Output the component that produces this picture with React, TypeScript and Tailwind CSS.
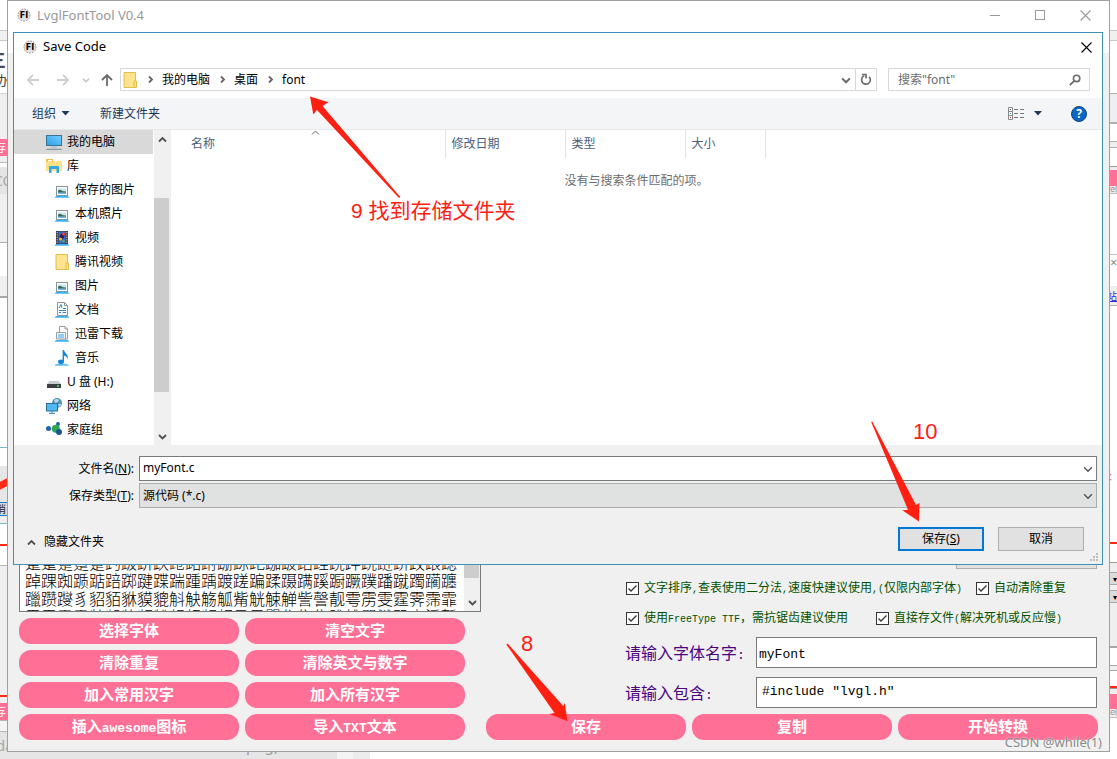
import React from "react";

type Segment = { box: string; text?: string; textClass?: string };

const LEFT_STRIP: Segment[] = [
  { box: "h-[30px] bg-white" },
  { box: "h-[11px] bg-[#f0f0f0] border-y border-[#c9c9c9]" },
  { box: "h-[28px] bg-white", text: "三", textClass: "text-[18px] leading-[38px] text-[#4a4a55] -ml-3 font-bold" },
  { box: "h-[24px] bg-white", text: "办", textClass: "text-[13px] leading-[22px] text-[#444] -ml-1" },
  { box: "h-[46px] bg-[#efefef] border-t border-[#d4d4d4]" },
  { box: "h-[17px] bg-[#ff6f96]", text: "存", textClass: "text-[11px] leading-[17px] text-white -ml-[5px]" },
  { box: "h-[7px] bg-[#efefef] border-b border-[#b8b8b8]" },
  { box: "h-[4px] bg-white" },
  { box: "h-[27px] bg-[#e4e4e4]", text: "CC", textClass: "text-[14px] leading-[27px] text-[#a8a8a8] -ml-[6px]" },
  { box: "h-[48px] bg-[#f0f0f0]" },
  { box: "h-[34px] bg-white border-t border-[#b0b0b0]" },
  { box: "h-[20px] bg-[#efefef]" },
  { box: "h-[151px] bg-white border-t-2 border-[#a8a8a8]" },
  { box: "h-[19px] bg-white border-t border-[#7db8d8]" },
  { box: "h-[14px] bg-[#e6e6e6]" },
  { box: "h-[8px] bg-[#ff2a16] -skew-y-[25deg]" },
  { box: "h-[14px] bg-[#e6e6e6]" },
  { box: "h-[14px] bg-[#d5dde3] border-y border-[#1979ca]", text: "消", textClass: "text-[10px] leading-[12px] text-[#222] -ml-1" },
  { box: "h-[7px] bg-[#eeeeee]" },
  { box: "h-[21px] bg-white border-t border-[#7db8d8]" },
  { box: "h-[2px] bg-[#ff2a16]" },
  { box: "h-[19px] bg-white" },
  { box: "h-[130px] bg-[#efefef] border-t border-[#b8b8b8]" },
  { box: "h-[2px] bg-[#ff2a16]" },
  { box: "h-[6px] bg-[#efefef]" },
  { box: "h-[17px] bg-[#ff6f96]", text: "存", textClass: "text-[11px] leading-[17px] text-white -ml-[5px]" },
  { box: "h-[12px] bg-[#f5f5f5] border-y border-[#b8b8b8]" },
  { box: "h-[20px] bg-[#e4e4e4]", text: "da", textClass: "text-[15px] leading-[26px] text-[#a8a8a8] -ml-1" },
];

const RIGHT_STRIP: Segment[] = [
  { box: "h-[30px] bg-white" },
  { box: "h-[11px] bg-[#f0f0f0] border-y border-[#c9c9c9]" },
  { box: "h-[52px] bg-white" },
  { box: "h-[31px] bg-[#efefef] border-t border-b-2 border-[#b0b0b0]" },
  { box: "h-[17px] bg-white" },
  { box: "h-[7px] bg-[#efefef] border-y border-[#b0b0b0]" },
  { box: "h-[18px] bg-white" },
  { box: "h-[4px] bg-[#efefef] border-t border-[#999]" },
  { box: "h-[16px] bg-[#ff6f96]" },
  { box: "h-[8px] bg-[#efefef] border-b border-[#c0c0c0]", text: "e(", textClass: "text-[9px] leading-[6px] text-[#999]" },
  { box: "h-[60px] bg-white" },
  { box: "h-[32px] bg-white border-t border-[#c0c0c0]", text: "×", textClass: "text-[13px] leading-[14px] text-[#888]" },
  { box: "h-[20px] bg-[#efefef] border-b border-[#b0b0b0]", text: "站", textClass: "text-[10px] leading-[20px] text-[#2a2adf] underline -ml-[3px]" },
  { box: "h-[164px] bg-white" },
  { box: "h-[12px] bg-white", text: "录", textClass: "text-[11px] leading-[12px] text-[#e85560] -ml-[9px]" },
  { box: "h-[60px] bg-white" },
  { box: "h-[2px] bg-[#ff2a16]" },
  { box: "h-[18px] bg-white" },
  { box: "h-[10px] bg-[#efefef] border-t border-[#999]" },
  { box: "h-[13px] bg-[#dcdcdc] border-y border-[#a8a8a8]", text: "▾", textClass: "text-[8px] leading-[11px] text-black text-right" },
  { box: "h-[5px] bg-[#efefef]" },
  { box: "h-[13px] bg-[#dcdcdc] border-y border-[#a8a8a8]", text: "▾", textClass: "text-[8px] leading-[11px] text-black text-right" },
  { box: "h-[43px] bg-[#efefef]" },
  { box: "h-[19px] bg-white border-t-2 border-[#a8a8a8]" },
  { box: "h-[6px] bg-[#efefef] border-y border-[#a8a8a8]" },
  { box: "h-[15px] bg-white" },
  { box: "h-[2px] bg-[#ff2a16]" },
  { box: "h-[6px] bg-[#efefef] border-t border-[#999]" },
  { box: "h-[15px] bg-[#ff6f96]" },
  { box: "h-[9px] bg-[#efefef] border-b border-[#c0c0c0]", text: "e(", textClass: "text-[9px] leading-[6px] text-[#999]" },
  { box: "flex-1 bg-white" },
];

function Strip({ segments, className }: { segments: Segment[]; className: string }) {
  return (
    <div aria-hidden="true" className={"flex shrink-0 flex-col overflow-hidden " + className}>
      {segments.map((s, i) => (
        <div key={i} className={"shrink-0 overflow-hidden whitespace-nowrap " + s.box}>
          {s.text && <div className={s.textClass}>{s.text}</div>}
        </div>
      ))}
    </div>
  );
}

/** Sets Latin runs in a smaller monospace so each is half as wide as a Chinese character. */
function Song({ text, latin }: { text: string; latin: string }) {
  return (
    <>
      {text.split(/([\x20-\x7e]+)/).filter(Boolean).map((part, i) =>
        /^[\x20-\x7e]+$/.test(part) ? (
          <span key={i} className={"font-['Liberation_Mono',monospace] whitespace-pre " + latin}>{part}</span>
        ) : (
          part
        )
      )}
    </>
  );
}

function AppIcon() {
  return (
    <svg width="14" height="14" viewBox="0 0 14 14" className="shrink-0" aria-hidden="true">
      <circle cx="7" cy="7" r="6" fill="#e2e2e2" stroke="#8d7f85" strokeWidth="1" strokeDasharray="1.5 1.3" />
      <text x="7" y="10" textAnchor="middle" fontSize="8" fontWeight="900" fontFamily="DejaVu Sans" fill="#000">FI</text>
    </svg>
  );
}

function Chevron({ dir, className = "text-[#505050]", size = 9, weight = 1.8 }: { dir: "up" | "down" | "right"; className?: string; size?: number; weight?: number }) {
  const d = { up: "M1 6.5 L4.5 3 L8 6.5", down: "M1 3 L4.5 6.5 L8 3", right: "M3 1.5 L6 4.5 L3 7.5" }[dir];
  return (
    <svg width={size} height={size} viewBox="0 0 9 9" className={"shrink-0 " + className} aria-hidden="true">
      <path d={d} fill="none" stroke="currentColor" strokeWidth={weight} />
    </svg>
  );
}

function Cross({ className }: { className: string }) {
  return (
    <svg width="11" height="11" viewBox="0 0 11 11" className={className} aria-hidden="true">
      <path d="M0.5 0.5 L10.5 10.5 M10.5 0.5 L0.5 10.5" stroke="currentColor" strokeWidth="1.1" />
    </svg>
  );
}

function NavArrow({ rotate, className }: { rotate: string; className: string }) {
  return (
    <svg width="14" height="14" viewBox="0 0 14 14" className={rotate + " " + className} aria-hidden="true">
      <path d="M13 7 H2 M7 2 L2 7 L7 12" fill="none" stroke="currentColor" strokeWidth="1.8" />
    </svg>
  );
}

type IconName = "pc" | "library" | "picture" | "video" | "folder" | "document" | "download" | "music" | "drive" | "network" | "homegroup";

const LaptopBase = () => <path d="M2.5 13.5 H13.5 L15.5 15.7 H0.5 Z" fill="#3fb0ee" />;

function TreeIcon({ name }: { name: IconName }) {
  return (
    <svg width="16" height="16" viewBox="0 0 16 16" className="shrink-0" aria-hidden="true">
      {name === "pc" && (
        <>
          <defs>
            <linearGradient id="screen" x1="0" y1="1" x2="1" y2="0">
              <stop offset="0" stopColor="#2b9fe8" />
              <stop offset="1" stopColor="#74d0ff" />
            </linearGradient>
          </defs>
          <rect x="0.5" y="1.5" width="15" height="10" fill="url(#screen)" stroke="#3b7195" />
          <path d="M5 13.2 H11" stroke="#9bb4c4" />
          <path d="M0.5 15.3 H15.5" stroke="#6f8798" strokeWidth="1" />
        </>
      )}
      {name === "library" && (
        <>
          <path d="M0 1 H7 V3 H16 V13 H0 Z" fill="#ffe08a" />
          <path d="M0 1 H7 V4 H0 Z" fill="#f0c24b" />
          <rect x="2" y="2" width="4" height="1.3" fill="#fff" />
          <path d="M3 15 V9 Q3 8 4 8 H12 Q13 8 13 9 V15 H10.5 V11 H5.5 V15 Z" fill="#31a8e0" />
        </>
      )}
      {name === "picture" && (
        <>
          <rect x="2.5" y="4.5" width="11" height="9" fill="#fff" stroke="#8c9399" />
          <rect x="4" y="6.5" width="8" height="5" fill="#c6e3f7" />
          <path d="M4 8.5 L6 7.8 L9 9.2 L12 9.5 V10.5 H4 Z" fill="#3c6a54" />
          <path d="M4 11 H12" stroke="#2a7dc0" />
          <LaptopBase />
        </>
      )}
      {name === "video" && (
        <>
          <rect x="2" y="1" width="12" height="13" fill="#3a3a40" />
          <rect x="4.5" y="1.5" width="7" height="12" fill="#3d67c9" />
          <path d="M5 7 L8 3 L11 5 L9 9 Z" fill="#2b1c4d" />
          <circle cx="9.5" cy="4" r="1.5" fill="#e94b35" />
          <circle cx="6.5" cy="9" r="1.5" fill="#f2b632" />
          <circle cx="9.5" cy="11" r="1.3" fill="#52b04a" />
          <path d="M3.2 2 V14 M12.8 2 V14" stroke="#d8d8d8" strokeWidth="1" strokeDasharray="1.2 1.2" />
          <path d="M2 14 H14 L15.5 15.7 H0.5 Z" fill="#3fb0ee" />
        </>
      )}
      {name === "folder" && (
        <>
          <path d="M2 0.5 H13.5 V15.5 H2 Z" fill="#ffe38f" stroke="#e3bd49" />
          <path d="M12 15.5 V9 H14.5 V15.5 Z" fill="#ffe38f" stroke="#e3bd49" />
        </>
      )}
      {name === "document" && (
        <>
          <path d="M3.5 0.5 H10.5 L13.5 3.5 V13.5 H3.5 Z" fill="#fff" stroke="#8c9399" />
          <path d="M10.5 0.5 V3.5 H13.5" fill="none" stroke="#8c9399" />
          <path d="M5 6 L7 2.5 L8 6 M9 6.5 H12 M5 8.5 H12 M5 10.5 H7 M8.5 10.5 H12" fill="none" stroke="#2a86cc" />
          <path d="M2 14 H14 L15.5 15.7 H0.5 Z" fill="#3fb0ee" />
        </>
      )}
      {name === "download" && (
        <>
          <path d="M5.5 0.5 H11 L13.5 3 V13 H5.5 Z" fill="#fff" stroke="#9aa0a5" />
          <path d="M11 0.5 V3 H13.5" fill="none" stroke="#9aa0a5" />
          <path d="M2.5 6.5 H11.5 V13 H2.5 Z" fill="#f3f6f8" stroke="#9aa0a5" />
          <rect x="4" y="8" width="6" height="4" fill="#8fcdf5" />
          <path d="M2 14 H14 L15.5 15.7 H0.5 Z" fill="#3fb0ee" />
        </>
      )}
      {name === "music" && (
        <>
          <path d="M2 14 H13 L15.5 15.7 H0.5 Z" fill="#5fc0f2" />
          <ellipse cx="7" cy="11.8" rx="3" ry="2.4" fill="#1287dd" />
          <path d="M8.6 12 V0 H10 C10.4 3 14.8 4.5 13.8 9.5 C13.2 6.8 11.5 6 10 5.8 V12 Z" fill="#1287dd" />
        </>
      )}
      {name === "drive" && (
        <>
          <path d="M3.5 7 H12.5 L15 10 H1 Z" fill="#c9cdd0" />
          <rect x="1" y="10" width="14" height="4" fill="#3b3f42" />
          <circle cx="12" cy="12" r="1" fill="#5fe36b" />
        </>
      )}
      {name === "network" && (
        <>
          <circle cx="11" cy="5" r="5" fill="#4f93b8" />
          <path d="M8 2 Q11 0 13 2 Q12 5 9 5 Z M12 6 Q15 5 15 7 L13 9 Z" fill="#b5d7e6" />
          <rect x="0.5" y="5.5" width="11" height="7.5" fill="#4fb9f5" stroke="#2d6d95" />
          <path d="M6 13 V14.5 M3 15.3 H9" stroke="#5e8ba6" strokeWidth="1.3" />
        </>
      )}
      {name === "homegroup" && (
        <>
          <path d="M3 7 L10 7 L12 2 M10 7 L13 11" stroke="#8fb7d8" fill="none" />
          <circle cx="2.5" cy="6.5" r="2.5" fill="#1f62ad" />
          <circle cx="12" cy="2" r="2" fill="#1f62ad" />
          <circle cx="9.8" cy="6.8" r="4" fill="#2fa84f" />
          <circle cx="13" cy="10" r="3" fill="#1b5596" />
        </>
      )}
    </svg>
  );
}

const TREE: { label: string; icon: IconName; nested?: boolean }[] = [
  { label: "我的电脑", icon: "pc" },
  { label: "库", icon: "library" },
  { label: "保存的图片", icon: "picture", nested: true },
  { label: "本机照片", icon: "picture", nested: true },
  { label: "视频", icon: "video", nested: true },
  { label: "腾讯视频", icon: "folder", nested: true },
  { label: "图片", icon: "picture", nested: true },
  { label: "文档", icon: "document", nested: true },
  { label: "迅雷下载", icon: "download", nested: true },
  { label: "音乐", icon: "music", nested: true },
  { label: "U 盘 (H:)", icon: "drive" },
  { label: "网络", icon: "network" },
  { label: "家庭组", icon: "homegroup" },
];

function SaveDialog() {
  return (
    <section
      role="dialog"
      aria-label="Save Code"
      className="absolute top-[31px] right-[6px] left-[5px] flex flex-col border border-[#3f8fb8] bg-white text-xs text-black"
    >
      <header className="flex h-7 items-center gap-[6px] pr-[10px] pl-[9px]">
        <AppIcon />
        <h2 className="flex-1 text-[13px]">Save Code</h2>
        <button aria-label="Close"><Cross className="text-black" /></button>
      </header>

      <div className="flex h-[37px] items-center pr-3 pl-[12px]">
        <button aria-label="Back" className="w-[30px]"><NavArrow rotate="rotate-0" className="text-[#d0d0d0]" /></button>
        <button aria-label="Forward" className="w-[26px]"><NavArrow rotate="rotate-180" className="text-[#d0d0d0]" /></button>
        <button aria-label="Recent" className="w-[18px]"><Chevron dir="down" size={8} className="text-[#c8c8c8]" /></button>
        <button aria-label="Up" className="w-5"><NavArrow rotate="rotate-90" className="text-[#6a6a6a]" /></button>
        <nav className="flex h-[23px] flex-1 items-center border border-[#d9d9d9] pl-px">
          <TreeIcon name="folder" />
          <ol className="flex flex-1 items-center">
            {["我的电脑", "桌面", "font"].map((p) => (
              <li key={p} className="flex items-center">
                <span className="flex w-[24px] justify-center"><Chevron dir="right" size={9} className="text-[#666]" /></span>
                <a href="#path" className="leading-5">{p}</a>
              </li>
            ))}
          </ol>
          <button aria-label="History" className="flex w-[18px] justify-center"><Chevron dir="down" size={10} className="text-[#6a6a6a]" /></button>
          <button aria-label="Refresh" className="flex h-full w-[21px] items-center justify-center border-l border-[#d9d9d9]">
            <svg width="12" height="13" viewBox="0 0 12 13" aria-hidden="true">
              <path d="M4.3 2.7 A4.4 4.4 0 1 0 9.2 3.8" fill="none" stroke="#6a6a6a" strokeWidth="1.7" />
              <path d="M2 1.5 H6 V5.5" fill="none" stroke="#6a6a6a" strokeWidth="1.6" />
            </svg>
          </button>
        </nav>
        <div className="ml-[11px] flex h-[23px] w-[202px] items-center border border-[#d9d9d9] pr-2 pl-[9px]">
          <input aria-label="搜索" type="text" placeholder={'搜索"font"'} className="w-full min-w-0 outline-none placeholder:text-[#6d6d6d]" />
          <svg width="12" height="12" viewBox="0 0 12 12" className="shrink-0" aria-hidden="true">
            <circle cx="7.6" cy="4.4" r="3.2" fill="none" stroke="#6a6a6a" strokeWidth="1.6" />
            <path d="M5.2 6.8 L0.8 11.2" stroke="#6a6a6a" strokeWidth="1.8" />
          </svg>
        </div>
      </div>

      <div className="flex h-8 items-center border-b border-[#e5e7ea] bg-[#f3f5f7] pr-[15px] pl-[18px] text-[#1e395b]">
        <button className="flex items-center gap-[5px]">
          组织
          <svg width="9" height="5" viewBox="0 0 9 5" aria-hidden="true"><path d="M0.5 0 H8.5 L4.5 4.5 Z" fill="#1e395b" /></svg>
        </button>
        <button className="ml-[30px]">新建文件夹</button>
        <button aria-label="View" className="ml-auto flex items-center gap-[9px]">
          <svg width="17" height="13" viewBox="0 0 17 13" aria-hidden="true">
            <path d="M0.5 0.5 H4.5 V12.5 H0.5 Z M0.5 4.5 H4.5 M0.5 8.5 H4.5" fill="#fff" stroke="#8a8a8a" />
            <path d="M6 2.5 H10 M12 2.5 H16 M6 6.5 H10 M12 6.5 H16 M6 10.5 H10 M12 10.5 H16" stroke="#777" />
            <rect x="2" y="2" width="1" height="1" fill="#555" />
            <rect x="2" y="6" width="1" height="1" fill="#2d8ad8" />
            <rect x="2" y="10" width="1" height="1" fill="#c83a2a" />
          </svg>
          <svg width="8" height="5" viewBox="0 0 8 5" aria-hidden="true"><path d="M0 0 H8 L4 4.5 Z" fill="#1e395b" /></svg>
        </button>
        <button aria-label="Help" className="ml-[29px] flex size-4 items-center justify-center rounded-full border border-[#11457e] bg-[#0a66c8] text-xs font-bold text-white">?</button>
      </div>

      <div className="flex h-[315px]">
        <ul className="w-[139px] shrink-0">
          {TREE.map((n, i) => (
            <li key={n.label} className={"flex h-6 items-center gap-[5px] " + (n.nested ? "pl-10 " : "pl-8 ") + (i === 0 ? "bg-[#d9d9d9]" : "")}>
              <TreeIcon name={n.icon} />
              <span>{n.label}</span>
            </li>
          ))}
        </ul>
        <div className="ml-px flex w-4 shrink-0 flex-col items-center bg-[#f0f0f0] pt-[5px] pb-1">
          <Chevron dir="up" />
          <div className="mt-[54px] h-[194px] w-[15px] self-start bg-[#cdcdcd]" />
          <Chevron dir="down" className="mt-auto text-[#505050]" />
        </div>
        <div className="relative min-w-0 flex-1 border-l border-[#f0f0f0]">
          <Chevron dir="up" weight={1} className="absolute -top-[2px] left-[140px] text-[#666]" />
          <table className="w-full table-fixed border-collapse text-left">
            <thead>
              <tr className="h-7 text-[#4c607a]">
                <th className="w-[274px] border-r border-[#e2e2e2] pl-5 font-normal">名称</th>
                <th className="w-[120px] border-r border-[#e2e2e2] pl-[6px] font-normal">修改日期</th>
                <th className="w-[120px] border-r border-[#e2e2e2] pl-[6px] font-normal">类型</th>
                <th className="w-[80px] border-r border-[#e2e2e2] pl-[6px] font-normal">大小</th>
                <th />
              </tr>
            </thead>
            <tbody>
              <tr>
                <td colSpan={5} className="pt-[15px] text-center text-[#6d6d6d]">没有与搜索条件匹配的项。</td>
              </tr>
            </tbody>
          </table>
        </div>
      </div>

      <footer className="relative bg-[#f0f0f0] pt-[11px] pr-[5px] pb-[13px]">
        <div className="grid grid-cols-[120px_1fr] items-center gap-x-[5px] gap-y-[2px]">
          <label htmlFor="filename" className="text-right">文件名(<u>N</u>):</label>
          <div className="flex h-[25px] items-center border border-[#7a7a7a] bg-white pr-[3px]">
            <input id="filename" defaultValue="myFont.c" className="min-w-0 flex-1 px-[3px] pb-[2px] outline-none" />
            <Chevron dir="down" size={10} weight={1.2} />
          </div>
          <label htmlFor="filetype" className="text-right">保存类型(<u>T</u>):</label>
          <div className="flex h-[25px] items-center border border-[#adadad] bg-[#dfe2e1] pr-[3px]">
            <select id="filetype" className="min-w-0 flex-1 appearance-none px-[3px] outline-none">
              <option>源代码 (*.c)</option>
            </select>
            <Chevron dir="down" size={10} weight={1.2} />
          </div>
        </div>
        <div className="mt-[19px] flex items-center pr-[13px] pl-[13px]">
          <button className="mr-auto flex items-center gap-2 pt-[6px]"><Chevron dir="up" size={9} />隐藏文件夹</button>
          <button className="h-6 w-[86px] border-2 border-[#0078d7] bg-[#e1e1e1] leading-5">保存(<u>S</u>)</button>
          <button className="ml-[14px] h-6 w-[86px] border border-[#adadad] bg-[#e1e1e1] leading-5">取消</button>
        </div>
        <svg width="9" height="9" viewBox="0 0 9 9" className="absolute right-[3px] bottom-[2px]" aria-hidden="true">
          <path d="M6 0h2v2h-2z M3 3h2v2h-2z M6 3h2v2h-2z M0 6h2v2h-2z M3 6h2v2h-2z M6 6h2v2h-2z" fill="#bdbdbd" />
        </svg>
      </footer>
    </section>
  );
}

function PinkButton({ text }: { text: string }) {
  return (
    <button className="h-[26px] rounded-xl bg-[#ff6f96] pb-[2px] text-[15px] leading-6 font-bold whitespace-nowrap text-white">
      <Song text={text} latin="text-[13px]" />
    </button>
  );
}

function Check({ text, className = "" }: { text: string; className?: string }) {
  return (
    <label className={"relative flex h-5 items-center gap-[5px] text-xs whitespace-nowrap text-[#005000] " + className}>
      <input type="checkbox" defaultChecked className="peer size-[13px] shrink-0 appearance-none border border-[#333] bg-white" />
      <svg width="13" height="13" viewBox="0 0 13 13" className="pointer-events-none absolute left-0 hidden peer-checked:block" aria-hidden="true">
        <path d="M2.5 6.5 L5 9 L10.5 3.5" fill="none" stroke="#333" strokeWidth="1.3" />
      </svg>
      <span><Song text={text} latin="text-[10px]" /></span>
    </label>
  );
}

const GLYPHS = [
  "趸跫踅蹙蹩趵趿趼趺跄跖跗跚跞跎跏跛跆跬跷跸跣跹跻跤踉跽",
  "踔踝踟踬踮踣踯踺蹀踹踵踽踱蹉蹁蹂蹑蹒蹊蹰蹶蹼蹯蹴躅躏躔",
  "躐躜躞豸貂貊貅貘貔斛觖觞觚觜觥觫觯訾謦靓雩雳雯霆霁霈霏",
  "霪霭霰霾龀龃龅龆龇龈龉龊龌黾鼋鼍隹隼隽雎雒瞿雠銎銮鋈錾",
].join("\n");

function Annotations() {
  return (
    <div className="pointer-events-none absolute inset-0 font-['Liberation_Sans','Noto_Sans_CJK_SC',sans-serif] text-[#ff2012]">
      <svg width="1117" height="759" viewBox="0 0 1117 759" className="absolute top-0 left-0" aria-hidden="true">
        <g fill="#ff2012">
          <path d="M310 96.5 L328.5 102.3 L322.5 106 L400.3 197 L399 198 L317 110 L313.3 114.5 Z" />
          <path d="M871.2 422 L872.3 421.6 L916 505 L919.5 503 L919 521.5 L902.3 510.3 L908 509.8 Z" />
          <path d="M506.3 644.4 L507.6 643.6 L563.3 706 L564.8 703 L567.5 721.3 L549.5 714 L554.5 713 Z" />
        </g>
      </svg>
      <span className="absolute top-[199px] left-[351px] text-[21px] leading-6">9 找到存储文件夹</span>
      <span className="absolute top-[420px] left-[913px] text-[22px] leading-6">10</span>
      <span className="absolute top-[632px] left-[521px] text-[22px] leading-6">8</span>
      <span className="absolute right-[15px] bottom-[7px] font-['Noto_Sans',sans-serif] text-[13px] leading-5 text-[#8a8a8a] [text-shadow:0_0_2px_white]">CSDN @while(1)</span>
    </div>
  );
}

export default function App() {
  return (
    <div className="relative overflow-hidden bg-white font-['Noto_Sans','Noto_Sans_CJK_SC',sans-serif]">
      <div className="flex h-[752px]">
        <Strip segments={LEFT_STRIP} className="w-[7px]" />

        <main className="relative flex min-w-0 flex-1 flex-col border border-[#a0a0a0] bg-[#f0f0f0]">
          <header className="flex h-[52px] items-start bg-white pt-[4px] pr-[18px] pl-[9px] text-[#999]">
            <div className="flex flex-1 items-center gap-[6px]">
              <AppIcon />
              <h1 className="text-[13px] leading-5">LvglFontTool V0.4</h1>
            </div>
            <div className="flex h-5 items-center gap-[35px]">
              <button aria-label="Minimize" className="h-px w-[10px] bg-[#999]" />
              <button aria-label="Maximize" className="size-[10px] border border-[#999]" />
              <button aria-label="Close window"><Cross className="text-[#999]" /></button>
            </div>
          </header>

          <div className="flex flex-1 items-end gap-[5px] px-[11px] pb-[11px]">
            <div className="w-[462px] shrink-0">
              <div className="flex h-[62px] border border-[#7a7a7a] bg-white">
                <textarea
                  aria-label="字符"
                  defaultValue={GLYPHS}
                  className="h-full min-w-0 flex-1 resize-none overflow-hidden pt-[2px] pl-[5px] font-['Noto_Sans_CJK_SC',sans-serif] text-base leading-[18px] font-light whitespace-pre text-black outline-none"
                />
                <div className="flex w-4 shrink-0 flex-col items-center bg-[#f0f0f0] pb-1">
                  <div className="h-[27px] w-[15px] self-start bg-[#cdcdcd]" />
                  <Chevron dir="down" className="mt-auto text-[#505050]" />
                </div>
              </div>
              <div className="mt-[6px] grid w-[446px] grid-cols-2 gap-[6px]">
                <PinkButton text="选择字体" />
                <PinkButton text="清空文字" />
                <PinkButton text="清除重复" />
                <PinkButton text="清除英文与数字" />
                <PinkButton text="加入常用汉字" />
                <PinkButton text="加入所有汉字" />
                <PinkButton text="插入awesome图标" />
                <PinkButton text="导入TXT文本" />
              </div>
            </div>

            <form className="min-w-0 flex-1" onSubmit={(e) => e.preventDefault()}>
              <div className="mb-[9px] flex justify-end pr-px">
                <button aria-label="字号" className="h-5 w-[141px] border border-[#adadad] bg-[#e1e1e1]" />
              </div>
              <div className="flex pl-[140px]">
                <Check className="w-[350px]" text="文字排序,查表使用二分法,速度快建议使用,(仅限内部字体)" />
                <Check text="自动清除重复" />
              </div>
              <div className="mt-[10px] flex pl-[140px]">
                <Check className="w-[250px]" text="使用FreeType TTF，需抗锯齿建议使用" />
                <Check text="直接存文件(解决死机或反应慢)" />
              </div>
              <div className="mt-[9px] grid grid-cols-[131px_1fr] items-center gap-y-[9px] pr-px pl-[139px] text-base leading-5 text-[#4b0082]">
                <label htmlFor="fontname" className="pt-1"><Song text="请输入字体名字:" latin="text-[13px]" /></label>
                <input id="fontname" defaultValue="myFont" className="h-[31px] w-full min-w-0 border border-[#7a7a7a] bg-white px-[2px] pt-1 font-['Liberation_Mono',monospace] text-[13px] text-black outline-none" />
                <label htmlFor="include" className="pt-1"><Song text="请输入包含:" latin="text-[13px]" /></label>
                <input id="include" defaultValue={'#include "lvgl.h"'} className="h-[31px] w-full min-w-0 border border-[#7a7a7a] bg-white px-[5px] pb-[2px] font-['Liberation_Mono',monospace] text-[13px] text-black outline-none" />
              </div>
              <div className="mt-[6px] grid grid-cols-3 gap-[6px]">
                <PinkButton text="保存" />
                <PinkButton text="复制" />
                <PinkButton text="开始转换" />
              </div>
            </form>
          </div>

          <SaveDialog />
        </main>

        <Strip segments={RIGHT_STRIP} className="w-[7px]" />
      </div>

      <div aria-hidden="true" className="flex h-[7px]">
        <div className="w-[337px] overflow-hidden bg-[#e6e6e6] pl-[246px]">
          <div className="-mt-[17px] text-[15px] leading-5 text-[#9a9a9a]">png)</div>
        </div>
        <div className="w-4 bg-[#f4f4f4]" />
        <div className="w-[17px] bg-[#ededed]" />
      </div>

      <Annotations />
    </div>
  );
}
